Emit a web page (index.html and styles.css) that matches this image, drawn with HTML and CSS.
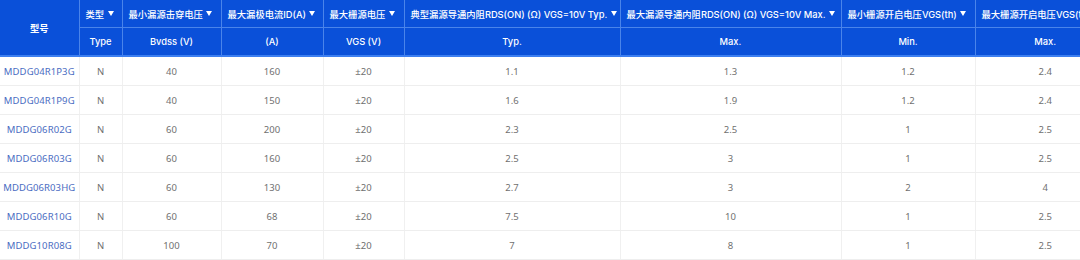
FILE: index.html
```html
<!DOCTYPE html>
<html>
<head>
<meta charset="utf-8">
<link rel="stylesheet" href="styles.css">
</head>
<body>
<div class="wrap">
<table class="spec">
  <colgroup>
    <col class="c1"><col class="c2"><col class="c3"><col class="c4"><col class="c5"><col class="c6"><col class="c7"><col class="c8"><col class="c9">
  </colgroup>
  <thead>
    <tr class="h1">
      <th rowspan="2" class="model-h">型号</th>
      <th>类型 <span class="tri"></span></th>
      <th>最小漏源击穿电压 <span class="tri"></span></th>
      <th>最大漏极电流ID(A) <span class="tri"></span></th>
      <th>最大栅源电压 <span class="tri"></span></th>
      <th>典型漏源导通内阻RDS(ON) (Ω) VGS=10V Typ. <span class="tri"></span></th>
      <th>最大漏源导通内阻RDS(ON) (Ω) VGS=10V Max. <span class="tri"></span></th>
      <th>最小栅源开启电压VGS(th) <span class="tri"></span></th>
      <th>最大栅源开启电压VGS(th) <span class="tri"></span></th>
    </tr>
    <tr class="h2">
      <th>Type</th>
      <th>Bvdss (V)</th>
      <th>(A)</th>
      <th>VGS (V)</th>
      <th>Typ.</th>
      <th>Max.</th>
      <th>Min.</th>
      <th>Max.</th>
    </tr>
  </thead>
  <tbody>
    <tr><td class="m">MDDG04R1P3G</td><td>N</td><td>40</td><td>160</td><td>±20</td><td>1.1</td><td>1.3</td><td>1.2</td><td>2.4</td></tr>
    <tr><td class="m">MDDG04R1P9G</td><td>N</td><td>40</td><td>150</td><td>±20</td><td>1.6</td><td>1.9</td><td>1.2</td><td>2.4</td></tr>
    <tr><td class="m">MDDG06R02G</td><td>N</td><td>60</td><td>200</td><td>±20</td><td>2.3</td><td>2.5</td><td>1</td><td>2.5</td></tr>
    <tr><td class="m">MDDG06R03G</td><td>N</td><td>60</td><td>160</td><td>±20</td><td>2.5</td><td>3</td><td>1</td><td>2.5</td></tr>
    <tr><td class="m">MDDG06R03HG</td><td>N</td><td>60</td><td>130</td><td>±20</td><td>2.7</td><td>3</td><td>2</td><td>4</td></tr>
    <tr><td class="m">MDDG06R10G</td><td>N</td><td>60</td><td>68</td><td>±20</td><td>7.5</td><td>10</td><td>1</td><td>2.5</td></tr>
    <tr><td class="m">MDDG10R08G</td><td>N</td><td>100</td><td>70</td><td>±20</td><td>7</td><td>8</td><td>1</td><td>2.5</td></tr>
  </tbody>
</table>
</div>
</body>
</html>
```
FILE: styles.css
```css
html, body {
  margin: 0;
  padding: 0;
  background: #ffffff;
}
.wrap {
  width: 1080px;
  height: 260px;
  overflow: hidden;
}
.spec {
  table-layout: fixed;
  border-collapse: collapse;
  width: 1115px;
  font-family: "Noto Sans", "Noto Sans CJK SC", sans-serif;
}
.c1 { width: 79px; }
.c2 { width: 43px; }
.c3 { width: 99px; }
.c4 { width: 102px; }
.c5 { width: 81px; }
.c6 { width: 216px; }
.c7 { width: 221px; }
.c8 { width: 134px; }
.c9 { width: 140px; }

thead th {
  background: #0a50d9;
  color: #ffffff;
  font-family: "Inter", "Noto Sans CJK SC", sans-serif;
  font-size: 9.3px;
  font-weight: 500;
  white-space: nowrap;
  overflow: hidden;
  border-left: 1px solid #4a84ea;
  padding: 0;
}
thead th:first-child { border-left: none; }
.h1 th {
  height: 27px;
  text-align: left;
  padding-left: 6px;
  border-bottom: 1px solid #4a84ea;
}
.h1 th.model-h {
  text-align: center;
  padding-left: 0;
  font-weight: 600;
  border-bottom: 2px solid #3d7ff0;
}
.h2 th {
  height: 27px;
  text-align: center;
  font-weight: 500;
  border-bottom: 2px solid #3d7ff0;
}
.h2 th:first-child { border-left: 1px solid #4a84ea; }

.tri {
  display: inline-block;
  width: 0;
  height: 0;
  border-left: 3.5px solid transparent;
  border-right: 3.5px solid transparent;
  border-top: 5px solid #ffffff;
  vertical-align: middle;
  margin-left: 1px;
  margin-top: -2px;
}

tbody td {
  height: 28px;
  padding: 0;
  text-align: center;
  font-size: 9.5px;
  color: #707070;
  border-bottom: 1px solid #eeeeee;
  border-left: 1px solid #f0f0f0;
  white-space: nowrap;
}
tbody td:first-child { border-left: none; }
tbody td.m {
  color: #4a6cc2;
  letter-spacing: 0.1px;
}
```
